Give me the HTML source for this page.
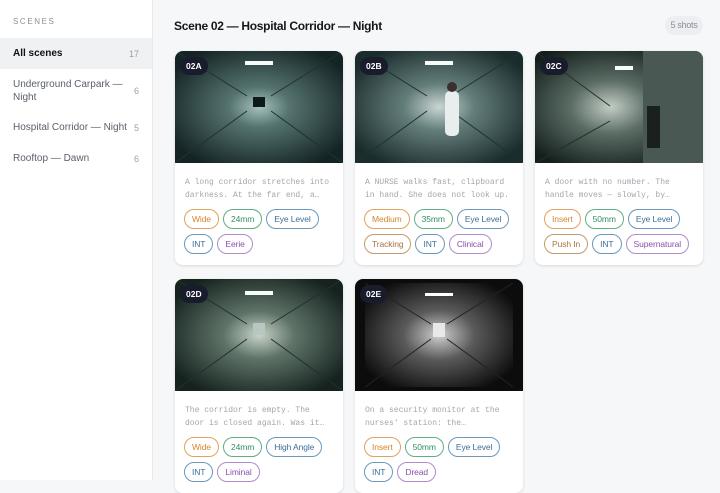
<!DOCTYPE html>
<html><head><meta charset="utf-8"><style>
*{box-sizing:border-box;margin:0;padding:0}
body{width:720px;height:480px;overflow:hidden;font-family:"Liberation Sans",sans-serif;background:#f6f7f9;position:relative}
.side{position:absolute;left:0;top:0;width:153px;height:480px;background:#fff;border-right:1px solid #e6e8eb}
.side h6{position:absolute;left:13px;top:17px;font-size:8px;letter-spacing:1.6px;color:#8a8f98;font-weight:normal}
.item{position:absolute;left:0;width:152px;padding:0 13px;font-size:10px;color:#5a5f68;line-height:13px}
.item .n{position:absolute;right:13px;top:50%;margin-top:-6px;color:#9aa0a8;font-size:9px}
.item.act{background:#f0f1f3;color:#111;font-weight:bold;height:31px;top:38px;padding-top:9px}
.item.act .n{font-weight:normal}
h1{position:absolute;left:174px;top:19px;font-size:12px;font-weight:bold;color:#15171c;letter-spacing:-.3px}
.pill{position:absolute;left:665px;top:16px;width:38px;height:19px;border-radius:10px;background:#eceef1;color:#8a8f98;font-size:9px;line-height:19px;text-align:center;letter-spacing:-.3px}
.card{position:absolute;width:168px;height:214px;background:#fff;border-radius:8px;box-shadow:0 1px 3px rgba(0,0,0,.12);overflow:hidden}
.img{height:112px;position:relative;overflow:hidden}
.img svg{display:block}
.badge{position:absolute;left:5px;top:6px;background:#181c2c;color:#fff;font-size:8.5px;font-weight:bold;padding:0 6px;height:18px;line-height:18px;border-radius:9px}
.txt{margin:13px 10px 0;font-family:"Liberation Mono",monospace;font-size:8px;line-height:13px;color:#a2a6ad;height:26px;overflow:hidden;display:-webkit-box;-webkit-line-clamp:2;-webkit-box-orient:vertical}
.tags{margin-top:7px;padding:0 9px;display:flex;flex-wrap:wrap;gap:5px 4px}
.t{height:20px;line-height:18px;border:1px solid;border-radius:10px;padding:0 7px;font-size:8.5px;letter-spacing:-.1px}
.o{color:#d4862b;border-color:#e0a35c}.g{color:#2f8f61;border-color:#5fae86}.b{color:#3b6f99;border-color:#6b98bd}.p{color:#8a4fb0;border-color:#b08ccc}.br{color:#a8733d;border-color:#c49a6b}
</style></head><body>
<div class="side"><h6>SCENES</h6>
<div class="item act">All scenes<span class="n">17</span></div>
<div class="item" style="top:78px">Underground Carpark —<br>Night<span class="n">6</span></div>
<div class="item" style="top:121px">Hospital Corridor — Night<span class="n">5</span></div>
<div class="item" style="top:152px">Rooftop — Dawn<span class="n">6</span></div>
</div>
<h1>Scene 02 — Hospital Corridor — Night</h1>
<div class="pill">5 shots</div>

<svg width="0" height="0" style="position:absolute"><defs>
<radialGradient id="r1" cx="50%" cy="50%" r="60%"><stop offset="0" stop-color="#a8c2be"/><stop offset=".3" stop-color="#55736f"/><stop offset="1" stop-color="#142424"/></radialGradient>
<radialGradient id="r2" cx="50%" cy="50%" r="60%"><stop offset="0" stop-color="#c9d6d3"/><stop offset=".35" stop-color="#637d7a"/><stop offset="1" stop-color="#1a2c2c"/></radialGradient>
<radialGradient id="r3" cx="45%" cy="50%" r="60%"><stop offset="0" stop-color="#c2ccc4"/><stop offset=".4" stop-color="#5a6c64"/><stop offset="1" stop-color="#141f1c"/></radialGradient>
<radialGradient id="r4" cx="50%" cy="50%" r="60%"><stop offset="0" stop-color="#c8d4c8"/><stop offset=".35" stop-color="#5f7469"/><stop offset="1" stop-color="#15221e"/></radialGradient>
<radialGradient id="r5" cx="50%" cy="50%" r="60%"><stop offset="0" stop-color="#d0d0d0"/><stop offset=".4" stop-color="#5a5a5a"/><stop offset="1" stop-color="#0c0c0c"/></radialGradient>
</defs></svg>

<div class="card" style="left:175px;top:51px"><div class="img"><svg width="168" height="112"><rect width="168" height="112" fill="url(#r1)"/><path d="M0 0L72 45M168 0L96 45M0 112L72 60M168 112L96 60" stroke="#1e3232" fill="none"/><rect x="78" y="46" width="12" height="10" fill="#0e1a1a"/><rect x="70" y="10" width="28" height="4" fill="#f4fbfa"/></svg><span class="badge">02A</span></div>
<div class="txt">A long corridor stretches into darkness. At the far end, a…</div>
<div class="tags"><span class="t o">Wide</span><span class="t g">24mm</span><span class="t b">Eye Level</span><span class="t b">INT</span><span class="t p">Eerie</span></div></div>

<div class="card" style="left:355px;top:51px"><div class="img"><svg width="168" height="112"><rect width="168" height="112" fill="url(#r2)"/><path d="M0 0L72 45M168 0L96 45M0 112L72 60M168 112L96 60" stroke="#1e3232" fill="none"/><rect x="70" y="10" width="28" height="4" fill="#f4fbfa"/><rect x="90" y="40" width="14" height="45" rx="5" fill="#e8eeee"/><circle cx="97" cy="36" r="5" fill="#3a3030"/></svg><span class="badge">02B</span></div>
<div class="txt">A NURSE walks fast, clipboard in hand. She does not look up.</div>
<div class="tags"><span class="t o">Medium</span><span class="t g">35mm</span><span class="t b">Eye Level</span><span class="t br">Tracking</span><span class="t b">INT</span><span class="t p">Clinical</span></div></div>

<div class="card" style="left:535px;top:51px"><div class="img"><svg width="168" height="112"><rect width="168" height="112" fill="url(#r3)"/><rect x="108" y="0" width="60" height="112" fill="#4a5853"/><rect x="112" y="55" width="13" height="42" fill="#1a201e"/><path d="M0 0L75 55M0 112L75 70" stroke="#22302b" fill="none"/><rect x="80" y="15" width="18" height="4" fill="#f4fbfa"/></svg><span class="badge">02C</span></div>
<div class="txt">A door with no number. The handle moves — slowly, by itself.</div>
<div class="tags"><span class="t o">Insert</span><span class="t g">50mm</span><span class="t b">Eye Level</span><span class="t br">Push In</span><span class="t b">INT</span><span class="t p">Supernatural</span></div></div>

<div class="card" style="left:175px;top:279px"><div class="img"><svg width="168" height="112"><rect width="168" height="112" fill="url(#r4)"/><path d="M0 0L72 45M168 0L96 45M0 112L72 60M168 112L96 60" stroke="#22302b" fill="none"/><rect x="70" y="12" width="28" height="4" fill="#f4fbfa"/><rect x="78" y="44" width="12" height="12" fill="#b8c8c0"/></svg><span class="badge">02D</span></div>
<div class="txt">The corridor is empty. The door is closed again. Was it ever…</div>
<div class="tags"><span class="t o">Wide</span><span class="t g">24mm</span><span class="t b">High Angle</span><span class="t b">INT</span><span class="t p">Liminal</span></div></div>

<div class="card" style="left:355px;top:279px"><div class="img"><svg width="168" height="112"><rect width="168" height="112" fill="#0c0c0c"/><rect x="10" y="4" width="148" height="104" rx="14" fill="url(#r5)"/><path d="M10 4L76 45M158 4L92 45M10 108L76 60M158 108L92 60" stroke="#222" fill="none"/><rect x="78" y="44" width="12" height="14" fill="#e8e8e8"/><rect x="70" y="14" width="28" height="3" fill="#fff"/></svg><span class="badge">02E</span></div>
<div class="txt">On a security monitor at the nurses' station: the corridor,…</div>
<div class="tags"><span class="t o">Insert</span><span class="t g">50mm</span><span class="t b">Eye Level</span><span class="t b">INT</span><span class="t p">Dread</span></div></div>
</body></html>
